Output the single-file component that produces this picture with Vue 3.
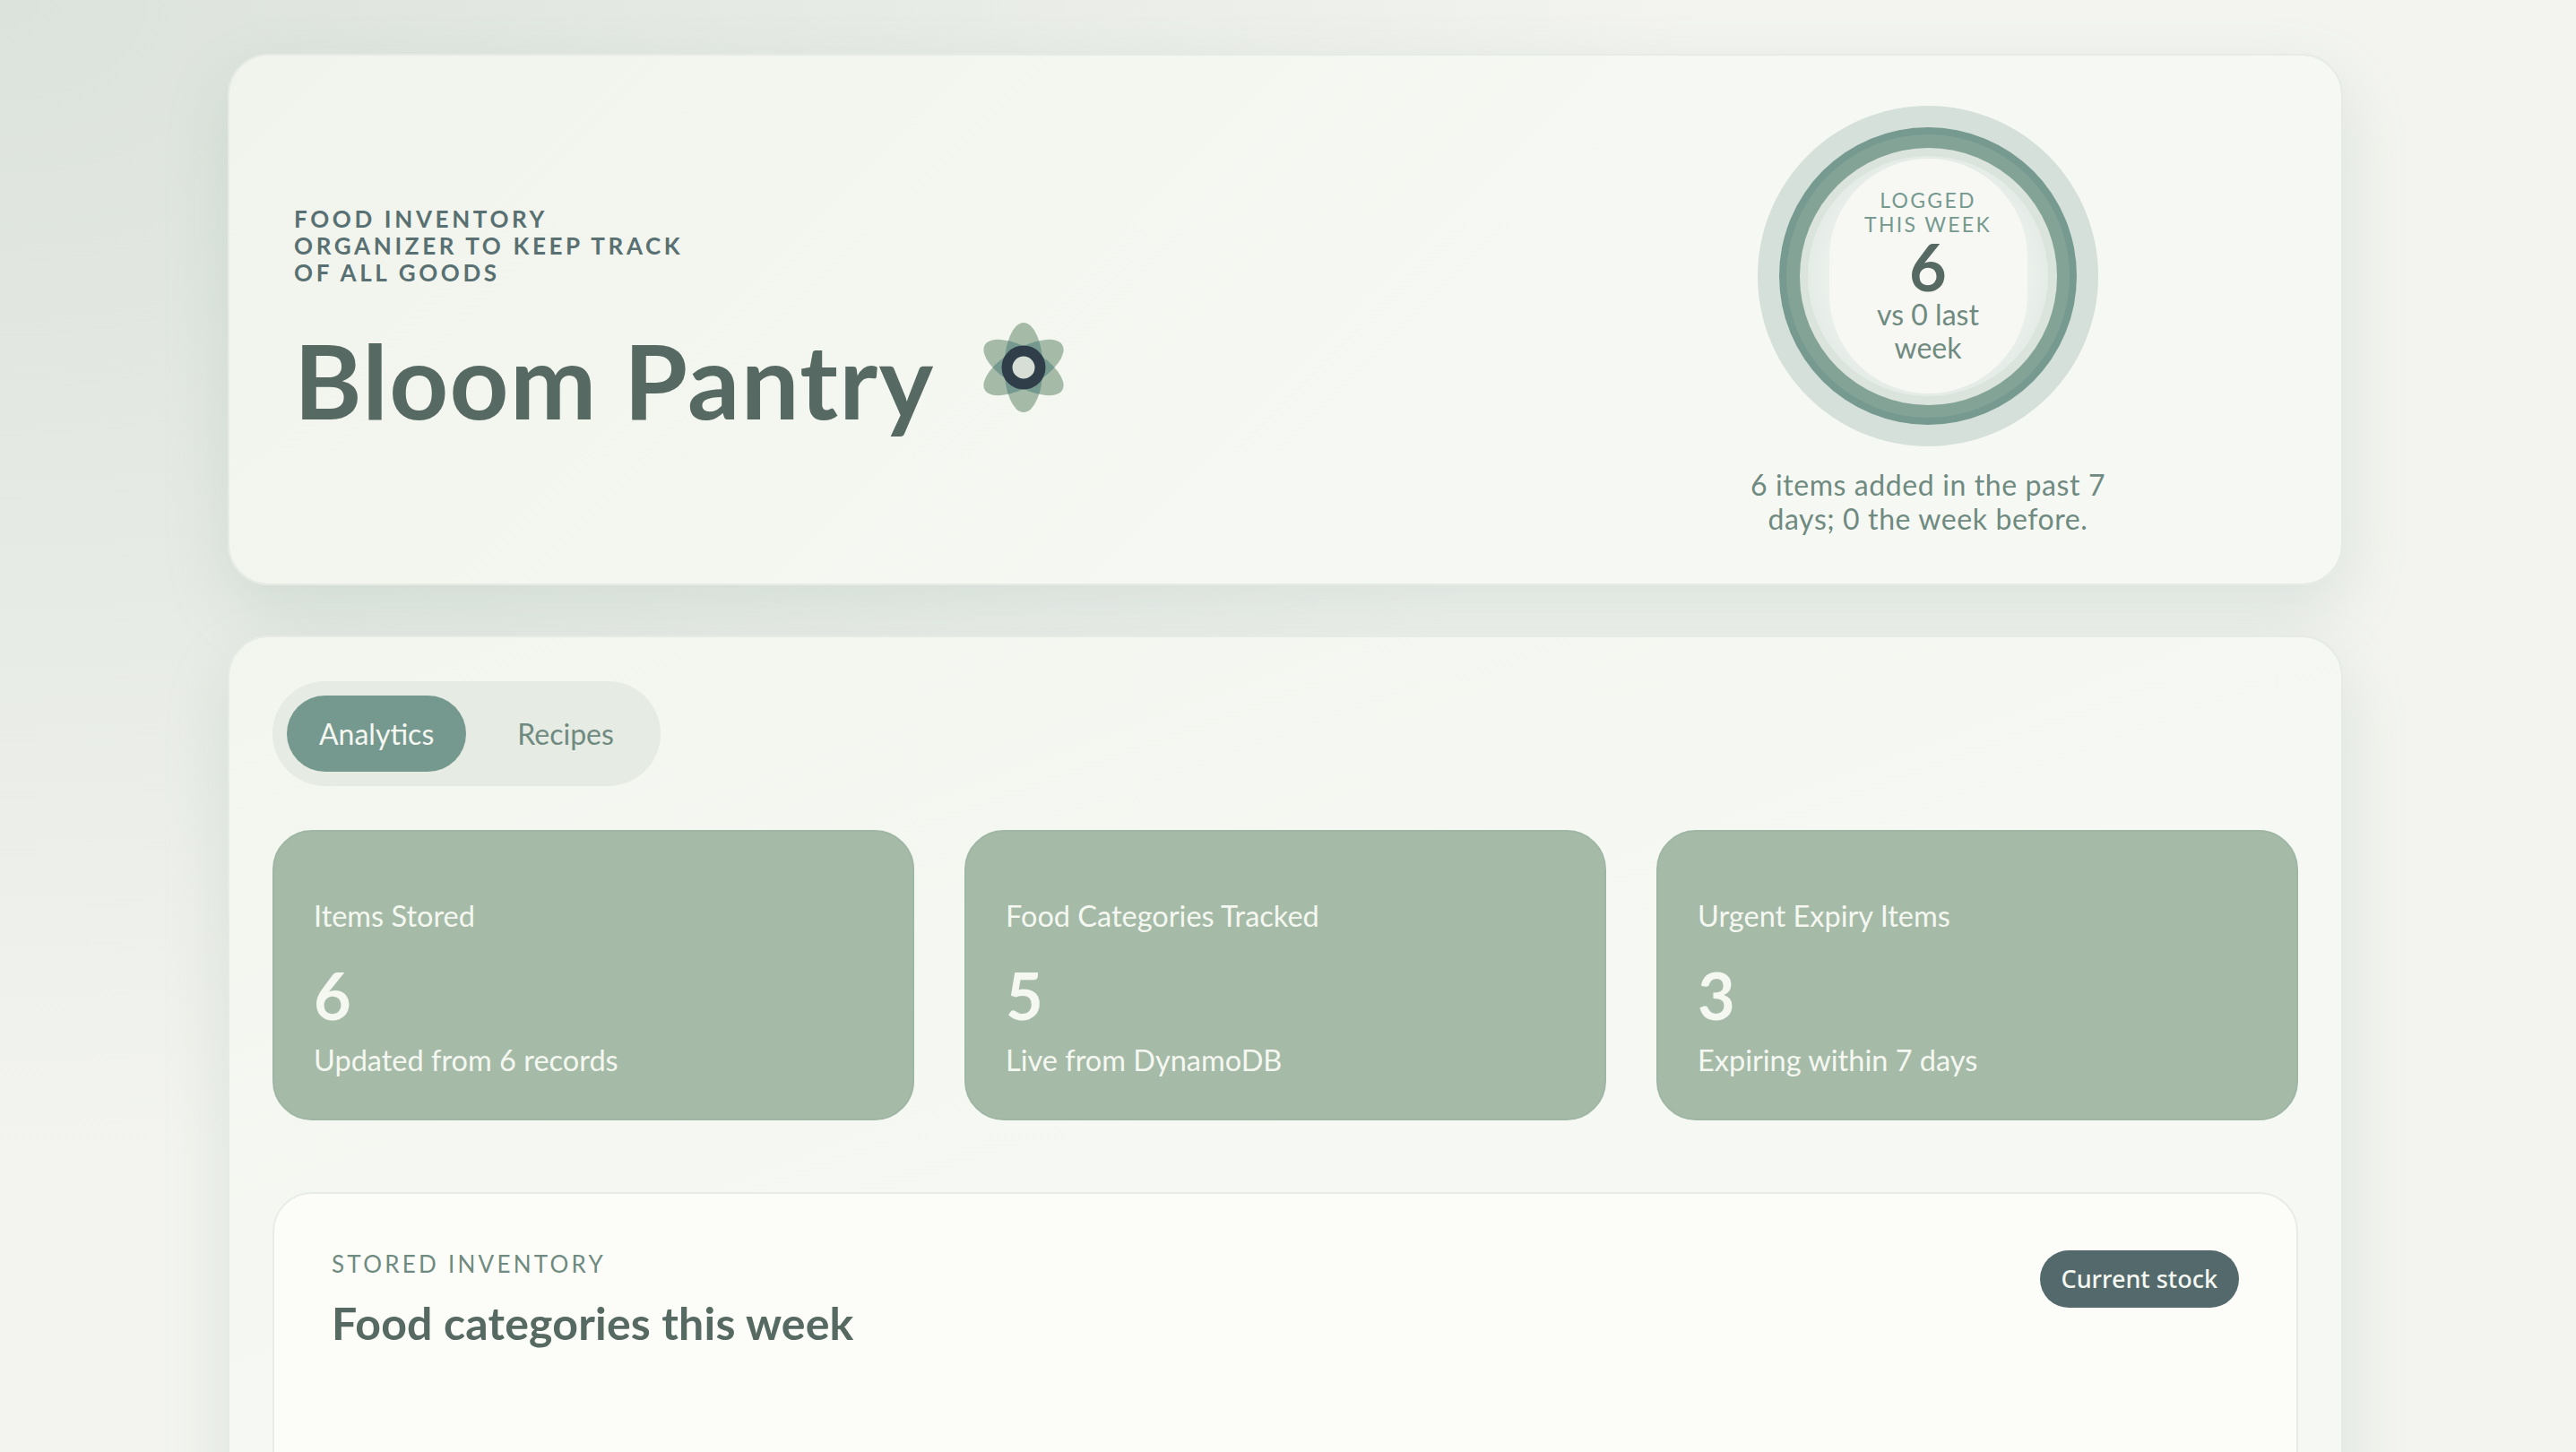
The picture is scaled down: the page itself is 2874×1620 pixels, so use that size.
<template>
  <div class="page">
    <section class="hero">
      <div class="hero-left">
        <p class="eyebrow">Food inventory<br />organizer to keep track<br />of all goods</p>
        <div class="title-row">
          <h1>Bloom Pantry</h1>
          <svg class="flower" width="100" height="100" viewBox="-50 -50 100 100">
            <defs>
              <clipPath id="clip-a"><ellipse rx="21.5" ry="50" /></clipPath>
              <clipPath id="clip-b"><ellipse rx="21.5" ry="50" transform="rotate(60)" /></clipPath>
            </defs>
            <g fill="#a5bba8">
              <ellipse rx="21.5" ry="50" />
              <ellipse rx="21.5" ry="50" transform="rotate(60)" />
              <ellipse rx="21.5" ry="50" transform="rotate(-60)" />
            </g>
            <g fill="#76998f">
              <g clip-path="url(#clip-a)"><ellipse rx="21.5" ry="50" transform="rotate(60)" /></g>
              <g clip-path="url(#clip-a)"><ellipse rx="21.5" ry="50" transform="rotate(-60)" /></g>
              <g clip-path="url(#clip-b)"><ellipse rx="21.5" ry="50" transform="rotate(-60)" /></g>
            </g>
            <circle r="18.5" fill="#d6ded6" stroke="#2f3e48" stroke-width="12" />
          </svg>
        </div>
      </div>
      <div class="hero-right">
        <div class="ring">
          <div class="ring-band">
            <div class="ring-band-inner">
              <div class="ring-track">
                <div class="ring-glow">
                  <div class="ring-center">
                    <span class="ring-label">Logged<br />this week</span>
                    <span class="ring-value">{{ thisWeek }}</span>
                    <span class="ring-note">vs {{ lastWeek }} last<br />week</span>
                  </div>
                </div>
              </div>
            </div>
          </div>
        </div>
        <p class="ring-caption">{{ thisWeek }} items added in the past 7<br />days; {{ lastWeek }} the week before.</p>
      </div>
    </section>

    <section class="board">
      <div class="tabs">
        <button class="tab active">Analytics</button>
        <button class="tab">Recipes</button>
      </div>

      <div class="stats">
        <div class="stat" v-for="s in stats" :key="s.title">
          <div class="stat-title">{{ s.title }}</div>
          <div class="stat-num">{{ s.num }}</div>
          <div class="stat-note">{{ s.note }}</div>
        </div>
      </div>

      <div class="panel">
        <div class="panel-head">
          <div>
            <div class="panel-label">Stored inventory</div>
            <h2>Food categories this week</h2>
          </div>
          <span class="badge">Current stock</span>
        </div>
      </div>
    </section>
  </div>
</template>

<script setup>
const thisWeek = 6
const lastWeek = 0

const stats = [
  { title: 'Items Stored', num: 6, note: 'Updated from 6 records' },
  { title: 'Food Categories Tracked', num: 5, note: 'Live from DynamoDB' },
  { title: 'Urgent Expiry Items', num: 3, note: 'Expiring within 7 days' }
]
</script>

<style>
html, body {
  margin: 0;
  background: #f1f3ee;
}
</style>

<style scoped>
.page {
  height: 1620px;
  overflow: hidden;
  box-sizing: border-box;
  padding: 60px 260px 0 254px;
  font-family: Lato, "Noto Sans", sans-serif;
  background:
    radial-gradient(ellipse 1900px 1300px at 0% 0%, #dce3dc 0, rgba(220, 227, 220, 0.75) 30%, rgba(220, 227, 220, 0) 100%),
    #f3f4ef;
}
.hero {
  height: 593px;
  box-sizing: border-box;
  display: flex;
  justify-content: space-between;
  padding: 0 251px 0 72px;
  background: linear-gradient(135deg, #f1f4ec, #f6f8f3 60%);
  border: 2px solid #e6ebe5;
  border-radius: 46px;
  box-shadow: 0 28px 72px rgba(118, 153, 143, 0.2);
}
.hero-left {
  padding-top: 167px;
}
.eyebrow {
  margin: 0 0 41px;
  font-size: 26px;
  line-height: 30px;
  font-weight: 700;
  letter-spacing: 0.14em;
  text-transform: uppercase;
  color: #597072;
}
.title-row {
  display: flex;
  align-items: flex-start;
  gap: 49px;
}
h1 {
  margin: 0;
  font-size: 115px;
  line-height: 1.1;
  font-weight: 700;
  letter-spacing: 1.4px;
  color: #566962;
}
.flower {
  margin-top: 0;
}
.hero-right {
  width: 420px;
  display: flex;
  flex-direction: column;
  align-items: center;
  gap: 24px;
  padding-top: 56px;
}
.ring, .ring-band, .ring-band-inner, .ring-track, .ring-glow {
  display: flex;
  flex: none;
  align-items: center;
  justify-content: center;
  border-radius: 50%;
}
.ring { width: 380px; height: 380px; background: #d5e0da; }
.ring-band { width: 332px; height: 332px; background: #769a90; }
.ring-band-inner { width: 316px; height: 316px; background: #84a397; }
.ring-track { width: 287px; height: 287px; background: #dae4dd; }
.ring-glow {
  width: 268px;
  height: 268px;
  background: radial-gradient(circle closest-side, #eff3ee 70%, #e5ece7 100%);
}
.ring-center {
  width: 221px;
  height: 262px;
  flex: none;
  display: flex;
  flex-direction: column;
  align-items: center;
  justify-content: center;
  text-align: center;
  border-radius: 50% / 42%;
  background: #f7f8f3;
}
.ring-label {
  font-size: 23px;
  line-height: 27px;
  letter-spacing: 0.1em;
  text-transform: uppercase;
  color: #76998f;
}
.ring-value {
  font-size: 72px;
  line-height: 66px;
  margin-bottom: 2px;
  font-weight: 700;
  color: #566962;
}
.ring-note {
  font-size: 32px;
  line-height: 37px;
  color: #6f8a80;
}
.ring-caption {
  margin: 0;
  font-size: 32px;
  line-height: 38px;
  letter-spacing: 0.6px;
  text-align: center;
  white-space: nowrap;
  color: #6f8a80;
}
.board {
  margin-top: 56px;
  height: 1200px;
  box-sizing: border-box;
  padding: 49px 48px 0;
  background: linear-gradient(160deg, #f3f6ef, #f6f8f3 50%);
  border: 2px solid #e6ebe5;
  border-radius: 46px;
  box-shadow: 0 28px 72px rgba(118, 153, 143, 0.2);
}
.tabs {
  display: inline-flex;
  gap: 21px;
  padding: 16px;
  background: #e6ebe3;
  border-radius: 60px;
}
.tab {
  height: 85px;
  padding: 0 36px;
  border: 0;
  border-radius: 43px;
  background: transparent;
  font-family: inherit;
  font-size: 32px;
  color: #6f8a80;
}
.tab.active {
  background: #76998f;
  color: #f5f7f1;
}
.stats {
  display: grid;
  grid-template-columns: repeat(3, 1fr);
  gap: 56px;
  margin-top: 49px;
}
.stat {
  height: 324px;
  box-sizing: border-box;
  padding: 74px 44px 0;
  background: #a5bba8;
  border: 2px solid #a0b6a4;
  border-radius: 44px;
  color: #f5f7f1;
}
.stat-title, .stat-note {
  font-size: 32.5px;
  line-height: 40px;
}
.stat-num {
  margin-top: 32px;
  font-size: 72px;
  line-height: 72px;
  font-weight: 700;
}
.stat-note {
  margin-top: 17px;
}
.panel {
  margin-top: 80px;
  height: 600px;
  box-sizing: border-box;
  padding: 62px 64px;
  background: #fcfdf8;
  border: 2px solid #e8ece7;
  border-radius: 44px;
}
.panel-head {
  display: flex;
  justify-content: space-between;
  align-items: flex-start;
}
.panel-label {
  font-size: 26px;
  line-height: 32px;
  letter-spacing: 0.125em;
  text-transform: uppercase;
  color: #6f8a80;
}
h2 {
  margin: 20px 0 0;
  font-size: 50px;
  line-height: 60px;
  font-weight: 700;
  letter-spacing: 0.2px;
  color: #566962;
}
.badge {
  height: 64px;
  line-height: 64px;
  margin-top: 1px;
  padding: 0 24px;
  border-radius: 32px;
  background: #53696b;
  font-family: "Noto Sans", sans-serif;
  font-size: 27px;
  font-weight: 500;
  color: #f5f7f1;
}
</style>
